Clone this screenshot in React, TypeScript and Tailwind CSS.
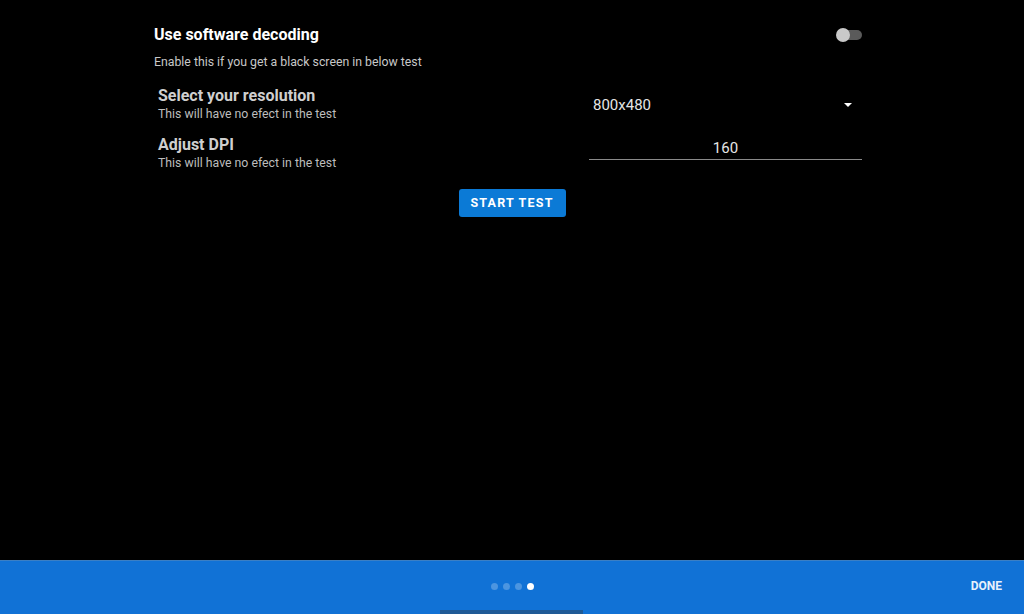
import React, { useState } from 'react';

const font = { fontFamily: 'Roboto, "Noto Sans", sans-serif' };

export default function App() {
  const [softDecode, setSoftDecode] = useState(false);
  const [dpi, setDpi] = useState('160');

  return (
    <div className="w-[1024px] h-[614px] bg-black flex flex-col overflow-hidden" style={font}>
      <div className="flex-1 flex justify-center">
        <div className="w-[708px] ml-[-8px] pt-[25px]">
          {/* software decoding toggle row */}
          <div className="flex items-start justify-between">
            <div>
              <div className="text-white text-[16px] font-bold leading-[20px]">Use software decoding</div>
              <div className="text-[#c8c8c8] text-[12.3px] leading-[16px] mt-[9px]">
                Enable this if you get a black screen in below test
              </div>
            </div>
            <button
              onClick={() => setSoftDecode(!softDecode)}
              className="relative w-[26px] h-[20px] flex items-center"
            >
              <span className="w-[24px] h-[10px] rounded-full bg-[#5a5a5a] ml-[2px]" />
              <span
                className={`absolute top-[3px] w-[14px] h-[14px] rounded-full ${softDecode ? 'left-[12px] bg-[#2d8cf0]' : 'left-0 bg-[#c9c9c9]'}`}
              />
            </button>
          </div>

          {/* resolution */}
          <div className="flex mt-[16px]">
            <div className="w-[435px] pl-[4px]">
              <div className="text-[#cfcfcf] text-[16px] font-bold leading-[20px]">Select your resolution</div>
              <div className="text-[#bdbdbd] text-[12.3px] leading-[15px] mt-[1px]">This will have no efect in the test</div>
            </div>
            <div className="flex-1 flex items-center justify-between pl-[4px] pr-[10px] pt-[1px]">
              <span className="text-[#e6e6e6] text-[15px] leading-[18px]">800x480</span>
              <svg width="8" height="4" viewBox="0 0 8 4">
                <path d="M0 0h8L4 4z" fill="#ffffff" />
              </svg>
            </div>
          </div>

          {/* dpi */}
          <div className="flex mt-[13px]">
            <div className="w-[435px] pl-[4px]">
              <div className="text-[#cfcfcf] text-[16px] font-bold leading-[20px]">Adjust DPI</div>
              <div className="text-[#bdbdbd] text-[12.3px] leading-[15px] mt-[1px]">This will have no efect in the test</div>
            </div>
            <div className="flex-1 pt-[1px]">
              <input
                value={dpi}
                onChange={(e) => setDpi(e.target.value)}
                className="w-full bg-transparent text-center text-[#e6e6e6] text-[15px] leading-[18px] pb-[2px] border-b border-[#8a8a8a] outline-none"
                style={font}
              />
            </div>
          </div>

          <div className="flex justify-center mt-[18px] ml-[8px]">
            <button className="w-[107px] h-[28px] rounded-[3px] bg-[#0b7ad6] text-white text-[12.5px] font-bold tracking-[1.2px]">
              START TEST
            </button>
          </div>
        </div>
      </div>

      {/* pager footer */}
      <div className="h-[54px] bg-[#1172d6] border-t border-[#3b7fc4] flex flex-col">
        <div className="flex-1 flex items-center relative">
          <div className="flex-1 flex justify-center gap-[5px] pl-[1px] pt-[1px]">
            <span className="w-[7px] h-[7px] rounded-full bg-[#4c95e0]" />
            <span className="w-[7px] h-[7px] rounded-full bg-[#4c95e0]" />
            <span className="w-[7px] h-[7px] rounded-full bg-[#4c95e0]" />
            <span className="w-[7px] h-[7px] rounded-full bg-white" />
          </div>
          <button className="absolute right-[22px] text-[#e8f1fb] text-[12px] font-bold">DONE</button>
        </div>
        <div className="flex justify-center">
          <div className="w-[143px] h-[4px] bg-[#1f5a96] mr-[1px]" />
        </div>
      </div>
    </div>
  );
}
